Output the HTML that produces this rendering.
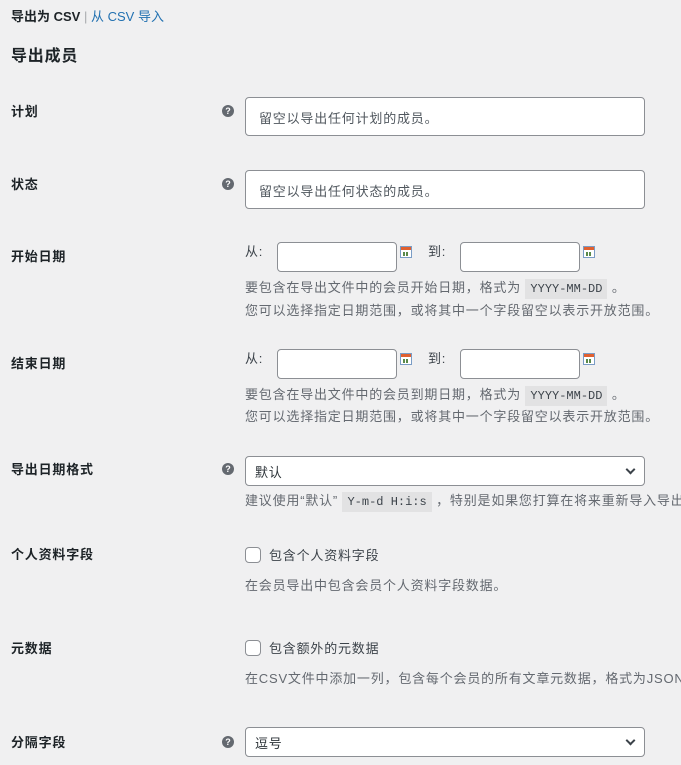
<!DOCTYPE html>
<html style="overflow:hidden"><head><meta charset="utf-8"><style>
html,body{overflow:hidden}
body{margin:0;width:681px;height:765px;background:#f0f0f1;font-family:"Liberation Sans","Noto Sans CJK SC",sans-serif;font-size:13px;color:#3c434a;position:relative}
#w{position:absolute;left:0;top:0;width:681px;height:765px;overflow:hidden}
.a{position:absolute;white-space:nowrap;line-height:18px;letter-spacing:0.8px}
.lb{font-weight:bold;color:#1d2327}
.hp{position:absolute;width:12px;height:12px;border-radius:50%;background:#646970;color:#fff;font-size:9px;font-weight:bold;text-align:center;line-height:12px}
.in{position:absolute;background:#fff;border:1px solid #8c8f94;border-radius:4px;box-sizing:border-box}
.ph{position:absolute;left:13px;top:10px;color:#50575e;font-size:13px;letter-spacing:0.8px;white-space:nowrap}
.d{color:#646970}
code{font-family:"Liberation Mono",monospace;font-size:12px;background:#e2e2e3;padding:3px 5px;color:#3c434a;letter-spacing:0}
.cal{position:absolute;width:12px;height:12px;border:1px solid #7a9cc5;background:linear-gradient(#e06030 0 3px,#fff 3px);box-sizing:border-box}
.cal:after{content:"";position:absolute;left:2px;top:5px;width:6px;height:4px;background:repeating-linear-gradient(90deg,#5a8a4a 0 2px,#fff 2px 3px)}
.cb{position:absolute;width:16px;height:16px;border:1px solid #8c8f94;border-radius:4px;background:#fff;box-sizing:border-box}
.chev{position:absolute;right:10px;top:9px;width:5px;height:5px;border-right:2px solid #3c434a;border-bottom:2px solid #3c434a;transform:rotate(45deg)}
</style></head><body><div id="w">
<div class="a" style="left:11px;top:8px;letter-spacing:0"><b style="color:#1d2327">导出为 CSV</b> <span style="color:#a7aaad">|</span> <span style="color:#2271b1">从 CSV 导入</span></div>
<div class="a lb" style="left:11px;top:47px;font-size:16px;line-height:20px">导出成员</div>

<div class="a lb" style="left:11px;top:103px">计划</div>
<div class="hp" style="left:222px;top:105px">?</div>
<div class="in" style="left:245px;top:97px;width:400px;height:39px"><span class="ph">留空以导出任何计划的成员。</span></div>

<div class="a lb" style="left:11px;top:176px">状态</div>
<div class="hp" style="left:222px;top:178px">?</div>
<div class="in" style="left:245px;top:170px;width:400px;height:39px"><span class="ph">留空以导出任何状态的成员。</span></div>

<div class="a lb" style="left:11px;top:248px">开始日期</div>
<div class="a" style="left:245px;top:243px">从:</div>
<div class="in" style="left:277px;top:242px;width:120px;height:30px"></div>
<div class="cal" style="left:400px;top:246px"></div>
<div class="a" style="left:428px;top:243px">到:</div>
<div class="in" style="left:460px;top:242px;width:120px;height:30px"></div>
<div class="cal" style="left:583px;top:246px"></div>
<div class="a d" style="left:245px;top:279px">要包含在导出文件中的会员开始日期，格式为 <code>YYYY-MM-DD</code> 。</div>
<div class="a d" style="left:245px;top:302px">您可以选择指定日期范围，或将其中一个字段留空以表示开放范围。</div>

<div class="a lb" style="left:11px;top:355px">结束日期</div>
<div class="a" style="left:245px;top:350px">从:</div>
<div class="in" style="left:277px;top:349px;width:120px;height:30px"></div>
<div class="cal" style="left:400px;top:353px"></div>
<div class="a" style="left:428px;top:350px">到:</div>
<div class="in" style="left:460px;top:349px;width:120px;height:30px"></div>
<div class="cal" style="left:583px;top:353px"></div>
<div class="a d" style="left:245px;top:386px">要包含在导出文件中的会员到期日期，格式为 <code>YYYY-MM-DD</code> 。</div>
<div class="a d" style="left:245px;top:408px">您可以选择指定日期范围，或将其中一个字段留空以表示开放范围。</div>

<div class="a lb" style="left:11px;top:461px">导出日期格式</div>
<div class="hp" style="left:222px;top:463px">?</div>
<div class="in" style="left:245px;top:456px;width:400px;height:30px"><span class="ph" style="left:9px;top:5px;color:#2c3338">默认</span><span class="chev"></span></div>
<div class="a d" style="left:245px;top:492px">建议使用“默认” <code>Y-m-d H:i:s</code> ，特别是如果您打算在将来重新导入导出</div>

<div class="a lb" style="left:11px;top:546px">个人资料字段</div>
<div class="cb" style="left:245px;top:547px"></div>
<div class="a" style="left:269px;top:547px">包含个人资料字段</div>
<div class="a d" style="left:245px;top:577px">在会员导出中包含会员个人资料字段数据。</div>

<div class="a lb" style="left:11px;top:640px">元数据</div>
<div class="cb" style="left:245px;top:640px"></div>
<div class="a" style="left:269px;top:640px">包含额外的元数据</div>
<div class="a d" style="left:245px;top:670px">在CSV文件中添加一列，包含每个会员的所有文章元数据，格式为JSON</div>

<div class="a lb" style="left:11px;top:734px">分隔字段</div>
<div class="hp" style="left:222px;top:736px">?</div>
<div class="in" style="left:245px;top:727px;width:400px;height:30px"><span class="ph" style="left:9px;top:5px;color:#2c3338">逗号</span><span class="chev"></span></div>
</div></body></html>
